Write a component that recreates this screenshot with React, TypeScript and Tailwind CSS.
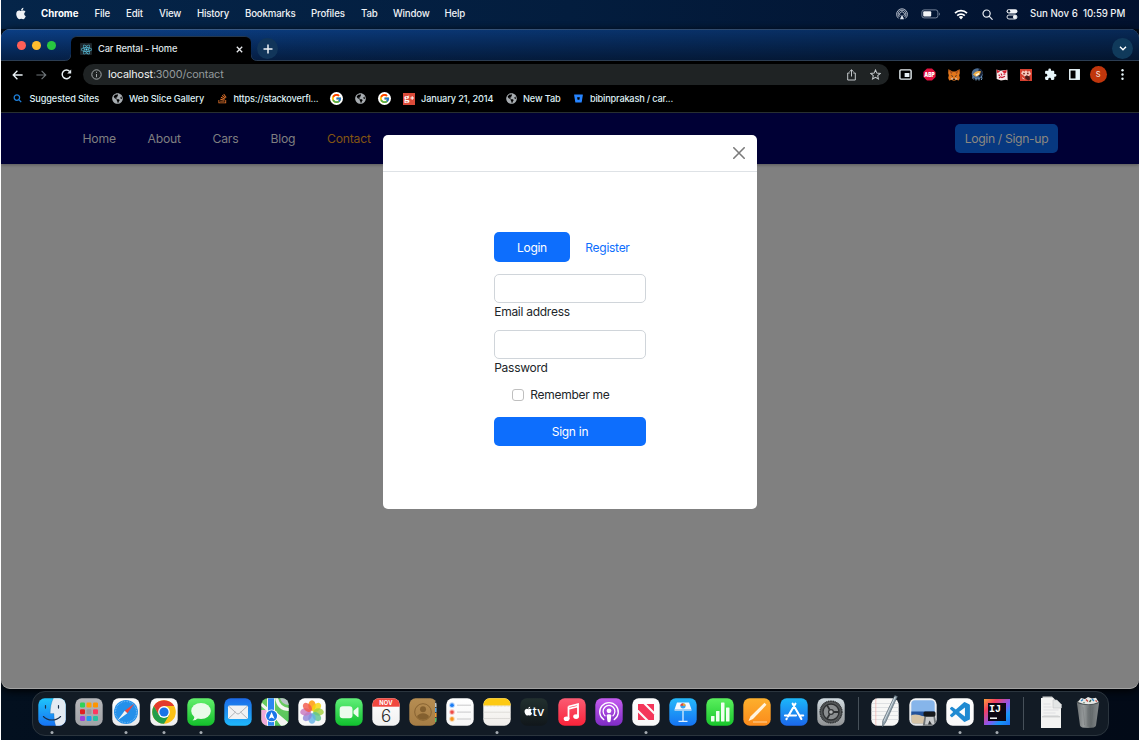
import React from "react";
import { FaApple, FaBitbucket, FaReact, FaStackOverflow, FaGlobeAmericas } from "react-icons/fa";
import { FcGoogle } from "react-icons/fc";
import { MdExtension } from "react-icons/md";

type Kids = { children: React.ReactNode };

/* ---------- menu bar ---------- */

function MenuBar() {
  return (
    <header className="flex h-[29px] shrink-0 items-center bg-linear-to-r from-[#052549] via-[#031d3e] to-[#02112e] pr-[12px] pl-[14px] text-[9.7px] font-medium tracking-[-0.18px] whitespace-nowrap text-[#eef1f5]">
      <FaApple className="mr-[14px] mb-[2px] h-[13px] w-[12px]" />
      <span className="w-[53.5px] font-bold tracking-[0px] text-white">Chrome</span>
      <span className="w-[31.5px]">File</span>
      <span className="w-[33px]">Edit</span>
      <span className="w-[38px]">View</span>
      <span className="w-[48px]">History</span>
      <span className="w-[66px]">Bookmarks</span>
      <span className="w-[50px]">Profiles</span>
      <span className="w-[32px]">Tab</span>
      <span className="w-[51.5px]">Window</span>
      <span>Help</span>
      <div className="ml-auto flex items-center">
        <svg className="mr-[13px] h-[12px] w-[12px]" viewBox="0 0 12 12" fill="none" stroke="#dfe5ee" strokeWidth="0.8">
          <path d="M2.6 10.4A5.4 5.4 0 1 1 9.4 10.4" />
          <path d="M3.4 9A3.9 3.9 0 1 1 8.6 9" />
          <path d="M4.2 7.8A2.4 2.4 0 1 1 7.8 7.8" />
          <path d="M6 6.4L8 11.2H4z" fill="#dfe5ee" stroke="none" />
        </svg>
        <svg className="mr-[13px] h-[10px] w-[20px]" viewBox="0 0 20 10">
          <rect x="0.9" y="0.9" width="16" height="8" rx="2.2" fill="none" stroke="#8290a5" strokeWidth="0.9" />
          <rect x="2.2" y="2.2" width="8" height="5.4" rx="1" fill="#f2f4f7" />
          <path d="M18 3.4c1 .5 1 2.7 0 3.2z" fill="#8290a5" />
        </svg>
        <svg className="mr-[14px] h-[11px] w-[14px]" viewBox="0 0 14 11" fill="none" stroke="#fff" strokeWidth="1.7">
          <path d="M1 4.2a8.4 8.4 0 0 1 12 0" />
          <path d="M3.2 6.6a5.4 5.4 0 0 1 7.6 0" />
          <path d="M4.8 8.1a3.2 3.2 0 0 1 4.4 0L7 10.6z" fill="#fff" stroke="none" />
        </svg>
        <svg className="mr-[13px] h-[11px] w-[11px]" viewBox="0 0 11 11" fill="none" stroke="#e8ecf2" strokeWidth="1.2">
          <circle cx="4.6" cy="4.6" r="3.6" />
          <path d="M7.3 7.3L10.2 10.3" strokeLinecap="round" />
        </svg>
        <svg className="mr-[12px] h-[12px] w-[12px]" viewBox="0 0 12 12">
          <rect x="0.6" y="1.2" width="10.8" height="4.2" rx="2.1" fill="#f2f4f7" />
          <circle cx="3" cy="3.3" r="1.2" fill="#03152f" />
          <rect x="1" y="7" width="10" height="4" rx="2" fill="none" stroke="#f2f4f7" strokeWidth="0.9" />
          <circle cx="8.9" cy="9" r="2" fill="#f2f4f7" />
        </svg>
        <span className="w-[53px] tracking-[0px]">Sun Nov 6</span>
        <span className="w-[44px] tracking-[-0.1px]">10:59 PM</span>
      </div>
    </header>
  );
}

/* ---------- browser chrome ---------- */

function TabStrip() {
  return (
    <div className="relative flex h-8 shrink-0 items-end bg-linear-to-b from-[#0b3f86] to-[#051f45] shadow-[inset_0_1px_0_#3d5f8c]">
      <div className="absolute inset-0 bg-linear-to-r from-transparent to-black/35" />
      <div className="absolute inset-x-0 bottom-0 h-px bg-[#2c3d52]" />
      <div className="relative flex h-full items-center gap-[6px] pl-[16px]">
        <i className="size-[9px] rounded-full bg-[#ff5f57]" />
        <i className="size-[9px] rounded-full bg-[#febc2e]" />
        <i className="size-[9px] rounded-full bg-[#28c840]" />
      </div>
      <svg className="relative ml-[9px] h-[25px] w-[6px]" viewBox="0 0 6 25">
        <path d="M6 18.5q0 6-6 6V25h6z" fill="#000" />
        <path d="M5.8 18.5q0 6-6 6" fill="none" stroke="#2b415b" strokeWidth="0.7" />
      </svg>
      <div className="relative flex h-[25px] w-[180px] items-center rounded-t-[6px] border-t border-[#24384f] bg-black pl-[9px]">
        <span className="flex size-3 items-center justify-center rounded-[1px] bg-[#1c2429]">
          <FaReact className="size-[11px] text-[#61dafb]" />
        </span>
        <span className="ml-[6px] text-[9.3px] font-medium tracking-[-0.13px] whitespace-nowrap text-[#dfe3e6]">Car Rental - Home</span>
        <svg className="mr-[8px] ml-auto size-[7px]" viewBox="0 0 7 7" stroke="#e8eaed" strokeWidth="1.3">
          <path d="M0.8 0.8L6.2 6.2M6.2 0.8L0.8 6.2" />
        </svg>
      </div>
      <svg className="relative h-[25px] w-[6px]" viewBox="0 0 6 25">
        <path d="M0 18.5q0 6 6 6V25H0z" fill="#000" />
        <path d="M0.2 18.5q0 6 6 6" fill="none" stroke="#2b415b" strokeWidth="0.7" />
      </svg>
      <span className="relative mb-[2px] flex size-[21px] items-center justify-center rounded-full bg-[#11355a]">
        <svg className="size-[10px]" viewBox="0 0 10 10" stroke="#f1f5f8" strokeWidth="1.5">
          <path d="M5 0.5V9.5M0.5 5H9.5" />
        </svg>
      </span>
      <span className="relative mr-[6px] mb-[2px] ml-auto flex size-[21px] items-center justify-center rounded-full bg-[#103a5b]">
        <svg className="h-[5px] w-[8px]" viewBox="0 0 8 5" fill="none" stroke="#fff" strokeWidth="1.4">
          <path d="M1 0.8L4 3.8L7 0.8" />
        </svg>
      </span>
    </div>
  );
}

function Slot({ children }: Kids) {
  return <span className="flex w-[24.1px] shrink-0 items-center justify-center">{children}</span>;
}

function Toolbar() {
  return (
    <div className="flex h-[26px] shrink-0 items-center bg-black pt-px pr-[4px] pl-[11px] text-[#e8eaed]">
      <svg className="h-[10px] w-[11px]" viewBox="0 0 11 10" fill="none" stroke="#e8f0f4" strokeWidth="1.3">
        <path d="M10.6 5H1.2M5.4 0.8L1.2 5l4.2 4.2" />
      </svg>
      <svg className="ml-[13px] h-[10px] w-[11px]" viewBox="0 0 11 10" fill="none" stroke="#70777b" strokeWidth="1.1">
        <path d="M0.4 5H9.8M5.6 0.8L9.8 5l-4.2 4.2" />
      </svg>
      <svg className="ml-[14px] size-[11px]" viewBox="0 0 11 11" fill="none" stroke="#e8f0f4" strokeWidth="1.5">
        <path d="M9.4 7.2A4.3 4.3 0 1 1 8.7 2.5" />
        <path d="M10.2 0.6V4.6H6.2z" fill="#e8f0f4" stroke="none" />
      </svg>
      <div className="ml-[11px] flex h-[21px] w-[806px] items-center rounded-full bg-[#1f2324] pr-[8px] pl-[8px]">
        <svg className="size-[11px]" viewBox="0 0 11 11" fill="none" stroke="#a3a8ab" strokeWidth="1">
          <circle cx="5.5" cy="5.5" r="4.7" />
          <path d="M5.5 5V8.2M5.5 2.8V3.9" />
        </svg>
        <span className="ml-[6px] pt-[2px] text-[10.8px] tracking-[-0.14px] text-[#949a9c]">
          <span className="text-[#f1f3f4]">localhost</span>:3000/contact
        </span>
        <svg className="mr-[14px] ml-auto h-[12px] w-[9px]" viewBox="0 0 9 12" fill="none" stroke="#c3c8cb" strokeWidth="1">
          <path d="M2.7 4H0.7v7h7.6V4H6.3M4.5 7.5V0.9M2.4 2.8L4.5 0.8l2.1 2" />
        </svg>
        <svg className="size-[11px]" viewBox="0 0 24 24" fill="none" stroke="#c3c8cb" strokeWidth="2.2">
          <path d="M12 2l3 6.9 7.4.7-5.6 4.9 1.7 7.3L12 18l-6.5 3.8 1.7-7.3L1.6 9.6 9 8.9z" />
        </svg>
      </div>
      <div className="ml-[4.5px] flex items-center">
        <Slot>
          <svg className="h-[11px] w-[13px]" viewBox="0 0 13 11">
            <rect x="0.9" y="0.9" width="11.2" height="9.2" rx="1" fill="none" stroke="#e8f0f4" strokeWidth="1.4" />
            <rect x="5.4" y="4" width="5" height="4" fill="#e8f0f4" />
            <path d="M2.6 2.8h7.6v1.2H5.4v4H2.6z" fill="#000" />
          </svg>
        </Slot>
        <Slot>
          <svg className="size-[13px]" viewBox="0 0 13 13">
            <path d="M4 .4h5L12.6 4v5L9 12.6H4L.4 9V4z" fill="#e4103f" />
            <text x="6.5" y="8.6" textAnchor="middle" fontSize="5.6" fontWeight="900" fill="#fff" textLength="10.4" lengthAdjust="spacingAndGlyphs">ABP</text>
          </svg>
        </Slot>
        <Slot>
          <svg className="size-[12px]" viewBox="0 0 12 12">
            <path d="M.4.3L4.6 2.4h2.8L11.6.3l.2 4-.6 2 .6 2.6-1 2.5-2.6-.6L7 11.7H5l-1.2-.9-2.6.6-1-2.5.6-2.6-.6-2z" fill="#e2761b" />
            <path d="M.4.3L4.6 3 3.4 5.4z M11.6.3L7.4 3l1.2 2.4z" fill="#a9501b" />
            <path d="M2.6 6l2.4.9-.4 1.1z M9.4 6L7 6.9l.4 1.1z" fill="#1d2129" />
            <path d="M4.6 9.8h2.8l-.4 1.4H5z" fill="#2b2320" />
            <path d="M3 9.2l1.6-.6.3 1.6-1.2.8zM9 9.2l-1.6-.6-.3 1.6 1.2.8z" fill="#d8bfa8" />
          </svg>
        </Slot>
        <Slot>
          <svg className="size-[13px]" viewBox="0 0 13 13">
            <circle cx="6.3" cy="5.8" r="5.6" fill="#4b6c92" />
            <path d="M8 .6a5.6 5.6 0 0 1 4 4.6L9 9.5 6 7z" fill="#18243a" />
            <path d="M2 6.5Q5 2.2 10 3.2L8.8 6.8 5 8.8z" fill="#f0b04a" />
            <path d="M4.4 6.4l4-1.9-.8 2.4-2.2 1z" fill="#fff6df" />
            <path d="M2 8.5q-.8 2 .8 3M5 10v2.500M8 10v2.500M10.500 8.500q1 2-.3 3.500" stroke="#7ba6d0" strokeWidth="1" fill="none" />
          </svg>
        </Slot>
        <Slot>
          <svg className="size-[12px]" viewBox="0 0 12 12">
            <path d="M.5.6l3.5 1.2L11.3.8l.4 10.4-2.2-.4L5 11.5.7 10z" fill="#fbe9ea" />
            <path d="M.5.6l3.6 2-2.8 1.6zM6 2l4.8-1-.6 2.8-2 .6z" fill="#d8202f" />
            <path d="M2.4 6l1.6.4M7.4 5.2l2-.2M3 9l1.4-1.2 1.6.8 3-1.400M5 4.500L6 6.500" stroke="#c6162d" strokeWidth="1.1" fill="none" />
          </svg>
        </Slot>
        <Slot>
          <svg className="size-[12px]" viewBox="0 0 12 12">
            <rect width="12" height="12" fill="#d6402f" />
            <path d="M1 4.5l1.8-3 1.600 1.300L6 1.200l1.400 1.600 2.200-.9L11 5 9 7 5.500 8z" fill="#f7c9bd" />
            <circle cx="4" cy="4.6" r="0.9" fill="#7a2018" />
            <circle cx="7.8" cy="4.4" r="0.9" fill="#7a2018" />
            <path d="M5 7.600l1.600-1.400 3 1.200.4 3-1.600 1-3-1.600z" fill="#4e1b18" />
            <path d="M2 8.600l2.400 1.600" stroke="#f7c9bd" strokeWidth="1" />
          </svg>
        </Slot>
        <Slot>
          <MdExtension className="size-[13px] text-[#e8f6fa]" />
        </Slot>
        <Slot>
          <svg className="h-[11px] w-[11px]" viewBox="0 0 11 11">
            <rect x="0.8" y="0.8" width="9.4" height="9.4" fill="none" stroke="#e8f6fa" strokeWidth="1.5" />
            <rect x="6.5" y="1" width="3.7" height="9" fill="#e8f6fa" />
          </svg>
        </Slot>
        <Slot>
          <span className="flex size-[17px] shrink-0 items-center justify-center rounded-full bg-[#c0360c] text-[7.5px] font-medium text-[#f3ddd5]">S</span>
        </Slot>
        <Slot>
          <svg className="h-[11px] w-[3px]" viewBox="0 0 3 11" fill="#e8f6fa">
            <circle cx="1.5" cy="1.3" r="1.2" />
            <circle cx="1.5" cy="5.5" r="1.2" />
            <circle cx="1.5" cy="9.7" r="1.2" />
          </svg>
        </Slot>
      </div>
    </div>
  );
}

function GoogleMark() {
  return (
    <span className="flex size-[13px] shrink-0 items-center justify-center rounded-full bg-white">
      <FcGoogle className="size-[11px]" />
    </span>
  );
}

function Globe() {
  return <FaGlobeAmericas className="size-[11px] shrink-0 text-[#a7acb0]" />;
}

function Bookmarks() {
  return (
    <div className="flex h-[26px] shrink-0 items-center border-b border-[#2b3233] bg-black pb-[2px] pl-[12px] text-[9.2px] font-medium tracking-[-0.12px] whitespace-nowrap text-[#dff0f5]">
      <svg className="size-[9px]" viewBox="0 0 9 9" fill="none" stroke="#1f7fd8" strokeWidth="1.3">
        <circle cx="3.9" cy="3.6" r="2.7" />
        <path d="M5.9 5.6L8.2 8.1" />
      </svg>
      <span className="ml-[7.5px] w-[82.5px]">Suggested Sites</span>
      <Globe />
      <span className="ml-[6px] w-[88px]">Web Slice Gallery</span>
      <FaStackOverflow className="size-[11px] shrink-0 text-[#e8762c]" />
      <span className="ml-[5.5px] w-[96.5px] tracking-[-0.19px]">https://stackoverfl...</span>
      <GoogleMark />
      <span className="ml-[12px] flex">
        <Globe />
      </span>
      <span className="mr-[11.5px] ml-[12px] flex">
        <GoogleMark />
      </span>
      <svg className="size-3 shrink-0" viewBox="0 0 12 12">
        <rect width="12" height="12" fill="#db4a39" />
        <text x="1" y="8.2" fontSize="11" fontWeight="700" fill="#fff" className="font-['Liberation_Serif'] tracking-[0px]">g</text>
        <path d="M9.2 3.200v3.600M7.400 5h3.600" stroke="#fff" strokeWidth="1" />
      </svg>
      <span className="ml-[6.5px] w-[84.5px]">January 21, 2014</span>
      <Globe />
      <span className="ml-[6.5px] w-[50.5px]">New Tab</span>
      <FaBitbucket className="size-[9px] shrink-0 text-[#2684ff]" />
      <span className="ml-[7.5px] tracking-[-0.19px]">bibinprakash / car...</span>
    </div>
  );
}

/* ---------- page ---------- */

function SiteNav() {
  return (
    <nav className="flex h-[51px] shrink-0 items-center bg-[#000035] pr-[81px] pl-[81.5px] text-[12.2px] tracking-[-0.22px] whitespace-nowrap text-[#7f7f80] shadow-[0_1px_3px_rgba(0,0,0,0.3)]">
      <span className="w-[65px] pt-[2px]">Home</span>
      <span className="w-[65px] pt-[2px]">About</span>
      <span className="w-[58px] pt-[2px]">Cars</span>
      <span className="w-[56.5px] pt-[2px]">Blog</span>
      <span className="pt-[2px] text-[#835511]">Contact</span>
      <button className="ml-auto h-[29px] w-[103px] rounded-[5px] bg-[#073880] pt-[2px] text-[12.2px] tracking-[-0.35px] text-[#8c8880]">Login / Sign-up</button>
    </nav>
  );
}

function Field({ label }: { label: string }) {
  return (
    <label className="mt-[12px] block">
      <input className="block h-[29px] w-full rounded-[5px] border border-[#d0d5da] bg-white" />
      <span className="block h-[15px] text-[12px] leading-[18px]">{label}</span>
    </label>
  );
}

function LoginModal() {
  return (
    <div className="h-[374px] w-[374.5px] rounded-[5px] bg-white text-[12px] tracking-[-0.27px] text-[#212529]">
      <div className="flex h-[37px] items-center justify-end border-b border-[#dee2e6] pr-[12px]">
        <svg className="size-[12px]" viewBox="0 0 12 12" stroke="#7b7b7b" strokeWidth="1.6" strokeLinecap="round">
          <path d="M0.8 0.8L11.2 11.2M11.2 0.8L0.8 11.2" />
        </svg>
      </div>
      <div className="mx-auto flex w-[151.6px] flex-col pt-[60px]">
        <div className="flex h-[30px]">
          <button className="w-[75.5px] rounded-[5px] bg-[#0d6efd] pt-[2px] text-white">Login</button>
          <button className="w-[75.5px] pt-[2px] text-[#0d6efd]">Register</button>
        </div>
        <Field label="Email address" />
        <Field label="Password" />
        <label className="mt-[11px] flex h-[19px] items-center gap-[6px] pl-[18px] whitespace-nowrap">
          <span className="size-[12px] rounded-[3px] border border-[#bfbfbf] bg-white" />
          <span className="pt-px">Remember me</span>
        </label>
        <button className="mt-[12.5px] h-[29px] rounded-[5px] bg-[#0d6efd] pt-[2px] text-white">Sign in</button>
      </div>
    </div>
  );
}

function BrowserWindow() {
  return (
    <main className="flex h-[660px] shrink-0 flex-col overflow-hidden rounded-[9px] bg-[#808080] shadow-[0_2px_8px_#000]">
      <TabStrip />
      <Toolbar />
      <Bookmarks />
      <div className="relative flex flex-1 flex-col rounded-b-[9px] shadow-[inset_0_-1px_0_#a2a2a2]">
        <SiteNav />
        <div className="absolute inset-0 flex items-start justify-center pt-[22px]">
          <LoginModal />
        </div>
      </div>
    </main>
  );
}

/* ---------- dock ---------- */

const r = 6.4;

function Grad({ id, a, b }: { id: string; a: string; b: string }) {
  return (
    <linearGradient id={id} x1="0" y1="0" x2="0" y2="1">
      <stop offset="0" stopColor={a} />
      <stop offset="1" stopColor={b} />
    </linearGradient>
  );
}

function Tile({ id, a, b, children }: { id: string; a: string; b: string; children?: React.ReactNode }) {
  return (
    <svg className="size-7" viewBox="0 0 28 28">
      <defs>
        <Grad id={id} a={a} b={b} />
        <clipPath id={id + "-clip"}>
          <rect x="0.3" y="0.3" width="27.4" height="27.4" rx={r} />
        </clipPath>
      </defs>
      <g clipPath={`url(#${id}-clip)`}>
        <rect width="28" height="28" fill={`url(#${id})`} />
        {children}
      </g>
    </svg>
  );
}

const launchColors = ["#30d158", "#ff9f0a", "#ff9500", "#e02020", "#98989d", "#ff375f", "#a040d8", "#1e9bf0", "#27c2a0"];
const petals = ["#ff9500", "#f5d60a", "#a4cf3c", "#5ec48f", "#64b2e8", "#8f86d8", "#c879c0", "#f2594b"];

const Finder = () => (
  <Tile id="finder" a="#1fc6fb" b="#1672f3">
    <path d="M15.5 0C13 5 12.3 10 12.2 15.5H16C16 20 16.5 24 17.8 28H28V0z" fill="#e3eaf2" />
    <path d="M15.5 0C13 5 12.3 10 12.2 15.5H16C16 20 16.5 24 17.8 28" fill="none" stroke="#17406e" strokeWidth="0.5" opacity="0.4" />
    <path d="M7.5 7.5v2.6M20.5 7.5v2.6" stroke="#1a2f4a" strokeWidth="1.2" strokeLinecap="round" />
    <path d="M5.4 18.5c4.5 4.7 12.7 4.7 17.2 0" fill="none" stroke="#1a2f4a" strokeWidth="1.1" strokeLinecap="round" />
  </Tile>
);
const Launchpad = () => (
  <Tile id="launch" a="#b7b8bb" b="#a1a2a6">
    {launchColors.map((c, i) => (
      <rect key={i} x={5 + (i % 3) * 6.5} y={4.5 + Math.floor(i / 3) * 6.7} width="5" height="5" rx="1.2" fill={c} />
    ))}
  </Tile>
);
const Safari = () => (
  <Tile id="safari" a="#ffffff" b="#e8e8ea">
    <circle cx="14" cy="14" r="12" fill="#2490ea" />
    <circle cx="14" cy="14" r="10.6" fill="none" stroke="#8cc6f3" strokeWidth="1.3" strokeDasharray="0.5 1.15" />
    <path d="M22.5 5.5L15.3 15.3 12.7 12.7z" fill="#f5443b" />
    <path d="M5.5 22.5L12.7 12.7 15.3 15.3z" fill="#f2f4f6" />
  </Tile>
);
const ChromeIcon = () => (
  <Tile id="chrome" a="#ffffff" b="#eeeeee">
    <circle cx="14" cy="14" r="11.8" fill="#fbc116" />
    <path d="M3.8 8.1A11.8 11.8 0 0 1 24.2 8.1H14L8.9 17z" fill="#e33b2e" />
    <path d="M3.8 8.1A11.8 11.8 0 0 0 14 25.8L19.2 17H8.9z" fill="#229d4b" />
    <circle cx="14" cy="14" r="5.9" fill="#fff" />
    <circle cx="14" cy="14" r="4.6" fill="#1a73e8" />
  </Tile>
);
const Messages = () => (
  <Tile id="messages" a="#63f06c" b="#12be2a">
    <ellipse cx="14" cy="13" rx="9.8" ry="8" fill="#e9fbe9" />
    <path d="M7.5 18.5q-.2 2.5-2 4 3.5 0 5.500-2.500z" fill="#e9fbe9" />
  </Tile>
);
const Mail = () => (
  <Tile id="mail" a="#1c69e8" b="#1fb9fb">
    <rect x="4" y="7.5" width="20" height="13.5" rx="1.7" fill="#f1f2f3" />
    <path d="M4.5 20.6L11.5 14M23.5 20.6L16.5 14M4.5 8l8.2 7.5q1.3 1.1 2.6 0L23.5 8" fill="none" stroke="#a9adb1" strokeWidth="0.9" />
  </Tile>
);
const Maps = () => (
  <Tile id="maps" a="#6fce62" b="#4fc25a">
    <path d="M0 12h10v16H0z" fill="#f1a9d8" />
    <path d="M6 0h8v28H6z" fill="#f4f4f2" />
    <path d="M7 0h6v28H7z" fill="#2d87f2" />
    <path d="M14 13L28 25v3H20L14 20z M0 4l7 6v4L0 8z" fill="#f4f4f2" />
    <path d="M14 0q2 13 14 13v-3Q19 9 17 0z" fill="#f5f5f3" />
    <path d="M19 0q2 7 9 7V0z" fill="#b9c2c8" />
    <circle cx="10.6" cy="17.8" r="6.4" fill="#fff" />
    <circle cx="10.6" cy="17.8" r="5.5" fill="#1b76e8" />
    <path d="M10.6 13.9l3 7.200-3-1.700-3 1.700z" fill="#fff" />
  </Tile>
);
const Photos = () => (
  <Tile id="photos" a="#ffffff" b="#f6f6f6">
    {petals.map((c, i) => (
      <ellipse key={i} cx="14" cy="7.5" rx="3.7" ry="5.3" fill={c} opacity="0.82" transform={`rotate(${i * 45} 14 14)`} />
    ))}
  </Tile>
);
const FaceTime = () => (
  <Tile id="facetime" a="#62f07a" b="#0fc02d">
    <rect x="4.7" y="8.2" width="12.8" height="12" rx="3" fill="#edfbee" />
    <path d="M18.5 12.8L22.7 9.3q.8-.4.8.6v8.6q0 1-.8.6L18.5 15.6z" fill="#edfbee" />
  </Tile>
);
const Calendar = () => (
  <Tile id="calendar" a="#ffffff" b="#f1f1f1">
    <rect width="28" height="8.7" fill="#f0483f" />
    <text x="14" y="6.9" textAnchor="middle" fontSize="5.8" fontWeight="700" fill="#fff" letterSpacing="0.2">NOV</text>
    <text x="14" y="23.5" textAnchor="middle" fontSize="17" fontWeight="300" fill="#2b2b2b">6</text>
  </Tile>
);
const Contacts = () => (
  <Tile id="contacts" a="#b68d52" b="#a67d45">
    <rect x="26" width="2" height="28" fill="#39424a" />
    <path d="M26.8 5v4" stroke="#bfc5c9" strokeWidth="1.6" />
    <path d="M26.8 10v4" stroke="#5aa7e8" strokeWidth="1.6" />
    <path d="M26.8 15v4" stroke="#f39b2d" strokeWidth="1.6" />
    <path d="M26.8 20v4" stroke="#52c468" strokeWidth="1.6" />
    <circle cx="14" cy="14" r="8.3" fill="none" stroke="#84602f" strokeWidth="0.9" />
    <circle cx="14" cy="11.3" r="3" fill="#84602f" />
    <path d="M8 19q1.5-3.7 6-3.7t6 3.7q-2.5 2.8-6 2.8T8 19z" fill="#84602f" />
  </Tile>
);
const Reminders = () => (
  <Tile id="reminders" a="#ffffff" b="#f6f6f6">
    {["#1c7df5", "#ee4b46", "#f7941e"].map((c, i) => (
      <g key={c}>
        <circle cx="6" cy={7.2 + i * 6.9} r="2.5" fill="none" stroke={c} strokeWidth="0.5" opacity="0.6" />
        <circle cx="6" cy={7.2 + i * 6.9} r="1.9" fill={c} />
        <path d={`M11 ${7.2 + i * 6.9}H25`} stroke="#bcbcbe" strokeWidth="0.8" />
      </g>
    ))}
  </Tile>
);
const Notes = () => (
  <Tile id="notes" a="#fffefb" b="#efedea">
    <rect width="28" height="7.5" fill="#fdc912" />
    <path d="M0 8h28" stroke="#c9b992" strokeWidth="0.7" strokeDasharray="0.7 0.7" />
    <path d="M0 14.2h28M0 20.5h28" stroke="#cfcdca" strokeWidth="0.6" />
  </Tile>
);
const Tv = () => (
  <Tile id="tv" a="#22302f" b="#10161a">
    <g transform="translate(3.2 8)">
      <FaApple size="10.2" color="#fff" />
    </g>
    <text x="12.4" y="18" fontSize="12" fontWeight="500" fill="#fff" textLength="12" lengthAdjust="spacingAndGlyphs">tv</text>
  </Tile>
);
const Music = () => (
  <Tile id="music" a="#fb5c74" b="#fa2239">
    <path d="M10.5 8.500L20 6.200V18.500M10.500 21V8.500M10.500 10.800L20 8.500" fill="none" stroke="#fff" strokeWidth="1.8" />
    <ellipse cx="8.6" cy="20.7" rx="2.9" ry="2.3" fill="#fff" />
    <ellipse cx="18.1" cy="18.6" rx="2.9" ry="2.3" fill="#fff" />
  </Tile>
);
const Podcasts = () => (
  <Tile id="podcasts" a="#c65df0" b="#7d2bc4">
    <g fill="none" stroke="#fff" strokeWidth="1.3" strokeLinecap="round">
      <path d="M8.8 21.6A9.3 9.3 0 1 1 19.2 21.6" />
      <path d="M10 17.7A5.9 5.9 0 1 1 18 17.7" />
    </g>
    <circle cx="14" cy="12.8" r="2.4" fill="#fff" />
    <path d="M11.7 17.6q0-1.4 2.3-1.4t2.3 1.4l-.7 5.4q-.3 1.2-1.6 1.2T12.4 23z" fill="#fff" />
  </Tile>
);
const News = () => (
  <Tile id="news" a="#ffffff" b="#f7f7f7">
    <path d="M6 6h5.5L22 16.5V22h-5.5L6 11.5z" fill="#f4365a" />
    <path d="M14.5 6H22v7.5zM6 14.5V22h7.5z" fill="#f4365a" />
  </Tile>
);
const Keynote = () => (
  <Tile id="keynote" a="#25b9fa" b="#1573f2">
    <path d="M8 4.5h12l2.5 7H5.5z" fill="#f4f9ff" />
    <path d="M5.5 11.5h17v1.2h-17z" fill="#c7dcf2" />
    <path d="M14 12.7V23" stroke="#dceefe" strokeWidth="1.3" />
    <path d="M9.5 23.4h9" stroke="#dceefe" strokeWidth="1.1" />
    <circle cx="14" cy="7.8" r="2.6" fill="#35a5f0" />
    <path d="M14 7.8V5.2a2.6 2.6 0 0 1 2.6 2.6z" fill="#f5a327" />
    <path d="M14 7.8V5.2a2.6 2.6 0 0 0-2.6 2.6z" fill="#e5433b" />
  </Tile>
);
const Numbers = () => (
  <Tile id="numbers" a="#5bf05e" b="#17c52b">
    <g fill="#f0fff0">
      <rect x="5" y="18" width="3.5" height="5.5" rx="0.5" />
      <rect x="10" y="13" width="3.5" height="10.5" rx="0.5" />
      <rect x="15" y="4.5" width="3.5" height="19" rx="0.5" />
      <rect x="20" y="9.5" width="3.5" height="14" rx="0.5" />
    </g>
  </Tile>
);
const Pages = () => (
  <Tile id="pages" a="#fdb02d" b="#fb8a1b">
    <path d="M5.5 23l2-4.5L21.5 4.8l2 2L10 21z" fill="#fff3df" />
    <path d="M10 24h14" stroke="#ffd49c" strokeWidth="1" />
  </Tile>
);
const AppStore = () => (
  <Tile id="appstore" a="#1cb8fa" b="#1b66ea">
    <g stroke="#fff" strokeWidth="2.1" strokeLinecap="round">
      <path d="M15.4 5.7L8 18.5M12.7 5.7L21.4 21M5 17.5H16M20 17.5H23.2M6.8 20.6L6.4 21.2" />
    </g>
  </Tile>
);
const Settings = () => (
  <Tile id="settings" a="#d3dde3" b="#8f9193">
    <circle cx="14" cy="14" r="11.3" fill="#55585a" />
    <circle cx="14" cy="14" r="10.8" fill="none" stroke="#2f3234" strokeWidth="1.6" strokeDasharray="0.9 0.8" />
    <circle cx="14" cy="14" r="8" fill="#8a8d8f" stroke="#2f3133" strokeWidth="1.4" />
    <circle cx="14" cy="14" r="2.4" fill="#b0b2b3" stroke="#2f3133" strokeWidth="1.2" />
    <path d="M16.5 14H22M12.7 11.8L10 7.1M12.7 16.2L10 20.9" stroke="#2f3133" strokeWidth="1.8" />
  </Tile>
);
const TextEdit = () => (
  <svg className="h-[34px] w-7" viewBox="0 -3 28 34">
    <rect x="0.3" y="0.3" width="27.4" height="27.4" rx={r} fill="#f7f7f6" />
    <path d="M.5 5.5h27M.5 9.5h27M.5 13.5h27M.5 17.5h27M.5 21.5h27" stroke="#cfd2d6" strokeWidth="0.6" />
    <path d="M4.8.5v27" stroke="#f0a29d" strokeWidth="0.6" />
    <path d="M23.8-2.5l2.6 1L14.8 24l-3.3 4.8.2-5.8z" fill="#8fa0ab" stroke="#4e5d68" strokeWidth="0.6" />
    <path d="M24-1L12.8 23.5" stroke="#dfe8ee" strokeWidth="0.8" />
  </svg>
);
const Preview = () => (
  <Tile id="preview" a="#f5f6f7" b="#e2e4e6">
    <rect x="2.3" y="2.3" width="23.4" height="23.4" rx="3.5" fill="#86b5ea" />
    <path d="M2.3 13.5h23.4V18H2.3z" fill="#23539b" />
    <path d="M2.3 17q6-1.5 12 1.5l11.4-1v5q0 3.2-3.5 3.2H5.8q-3.5 0-3.5-3.2z" fill="#d5c4a6" />
    <path d="M15.5 18h10.5l1.8 10H13.7z" fill="#6f7477" />
    <path d="M17 19h7.5l1 7.5H16z" fill="#c9cccd" />
    <path d="M19 26.5l1.5-4 2.5 4z" fill="#33373a" />
    <rect x="14.5" y="13.5" width="12" height="5" rx="1.5" fill="#15181a" />
  </Tile>
);
const VsCode = () => (
  <Tile id="vscode" a="#ffffff" b="#f8f8f8">
    <path transform="translate(4 4) scale(0.83)" fill="#1f8ad2" d="M23.15 2.587L18.21.21a1.494 1.494 0 0 0-1.705.29l-9.46 8.63-4.12-3.128a.999.999 0 0 0-1.276.057L.327 7.261A1 1 0 0 0 .326 8.74L3.899 12 .326 15.26a1 1 0 0 0 .001 1.479L1.65 17.94a.999.999 0 0 0 1.276.057l4.12-3.128 9.46 8.63a1.492 1.492 0 0 0 1.704.29l4.942-2.377A1.5 1.5 0 0 0 24 20.06V3.939a1.5 1.5 0 0 0-.85-1.352zm-5.146 14.861L10.826 12l7.178-5.448v10.896z" />
  </Tile>
);
const IntelliJ = () => (
  <svg className="size-7" viewBox="0 0 28 28">
    <defs>
      <linearGradient id="ij" x1="0" y1="0" x2="1" y2="1">
        <stop offset="0" stopColor="#fca23a" />
        <stop offset="0.25" stopColor="#f5405f" />
        <stop offset="0.55" stopColor="#8a55f0" />
        <stop offset="0.75" stopColor="#1596f5" />
        <stop offset="1" stopColor="#1d6bf3" />
      </linearGradient>
    </defs>
    <rect x="1" y="1" width="26" height="26" fill="url(#ij)" />
    <rect x="5" y="5" width="18" height="18" fill="#0d0612" />
    <text x="6" y="14" fontSize="10" fontWeight="700" fill="#fff" className="font-['Liberation_Mono']">IJ</text>
    <path d="M7 20.2h7" stroke="#fff" strokeWidth="1.5" />
  </svg>
);
const Documents = () => (
  <svg className="h-[33px] w-7" viewBox="0 0 28 33">
    <path d="M5.5 0.5H15l6 6v3H5.5z" fill="#d2d4d4" />
    <path d="M4 2h12.5v8.5H24V32H4z" fill="#f3f3f2" />
    <path d="M16 4h4l4.5 4.5v3.5H16z" fill="#e4e6e6" stroke="#b8bbbd" strokeWidth="0.5" />
    <path d="M6.5 8h7M6.5 11h8M6.5 14h15M6.5 17h12M6.5 19.5h15" stroke="#d3d5d7" strokeWidth="0.6" />
    <path d="M5 20.8h18" stroke="#9da1a4" strokeWidth="0.6" />
  </svg>
);
const Trash = () => (
  <svg className="h-[33px] w-7" viewBox="0 0 28 33">
    <defs>
      <linearGradient id="can" x1="0" y1="0" x2="1" y2="0">
        <stop offset="0" stopColor="#6b7072" />
        <stop offset="0.3" stopColor="#989c9d" />
        <stop offset="0.6" stopColor="#646a6c" />
        <stop offset="1" stopColor="#83888a" />
      </linearGradient>
    </defs>
    <path d="M2.8 6h22.4L22 29.5q-.3 2.5-8 2.5T6 29.5z" fill="url(#can)" />
    <ellipse cx="14" cy="6" rx="11.2" ry="3" fill="#484e51" />
    <path d="M4 6l3-4 4 1 3-2 4 1.5 4-.8L24.5 6q-10 4.5-20.500 0z" fill="#e6e8e6" />
    <path d="M7 5l2-1.5M18 3l2 2" stroke="#2f86c4" strokeWidth="1.4" />
    <path d="M12 3.5l2 2M21.5 4.5l1.5 1" stroke="#c9473d" strokeWidth="1.3" />
    <path d="M15.5 6l1.5-2M9.5 6.5l1 .5" stroke="#40623f" strokeWidth="1.3" />
    <path d="M9 11l1.5 18M14 12v18M19 11l-1.5 18" stroke="#5c6163" strokeWidth="0.5" opacity="0.6" />
  </svg>
);

function DockItem({ children, running }: Kids & { running?: boolean }) {
  return (
    <div className="relative flex h-full w-[37.1px] shrink-0 items-center justify-center pb-[3px]">
      {children}
      {running && <i className="absolute bottom-[1px] left-1/2 size-[3px] -translate-x-1/2 rounded-full bg-[#a5abb1]" />}
    </div>
  );
}

function Divider() {
  return (
    <div className="flex w-[17.2px] shrink-0 justify-center">
      <div className="h-[33px] w-px bg-[#465059]" />
    </div>
  );
}

function Dock() {
  return (
    <footer className="mt-[2px] ml-[31px] flex h-[45px] w-[1077px] shrink-0 items-center rounded-[13px] border border-[#2b353e] bg-[#121b25] pl-[0.7px]">
      <DockItem running><Finder /></DockItem>
      <DockItem><Launchpad /></DockItem>
      <DockItem running><Safari /></DockItem>
      <DockItem running><ChromeIcon /></DockItem>
      <DockItem running><Messages /></DockItem>
      <DockItem><Mail /></DockItem>
      <DockItem><Maps /></DockItem>
      <DockItem><Photos /></DockItem>
      <DockItem><FaceTime /></DockItem>
      <DockItem><Calendar /></DockItem>
      <DockItem><Contacts /></DockItem>
      <DockItem><Reminders /></DockItem>
      <DockItem running><Notes /></DockItem>
      <DockItem><Tv /></DockItem>
      <DockItem><Music /></DockItem>
      <DockItem><Podcasts /></DockItem>
      <DockItem running><News /></DockItem>
      <DockItem><Keynote /></DockItem>
      <DockItem><Numbers /></DockItem>
      <DockItem><Pages /></DockItem>
      <DockItem><AppStore /></DockItem>
      <DockItem><Settings /></DockItem>
      <Divider />
      <DockItem><TextEdit /></DockItem>
      <DockItem><Preview /></DockItem>
      <DockItem running><VsCode /></DockItem>
      <DockItem running><IntelliJ /></DockItem>
      <Divider />
      <DockItem><Documents /></DockItem>
      <DockItem><Trash /></DockItem>
    </footer>
  );
}

export default function App() {
  return (
    <div className="flex h-[740px] w-[1140px] flex-col overflow-hidden border-x border-white bg-linear-to-r from-[#03101f] via-[#020b1c] to-[#020a17] font-['Inter',sans-serif]">
      <MenuBar />
      <BrowserWindow />
      <Dock />
    </div>
  );
}
